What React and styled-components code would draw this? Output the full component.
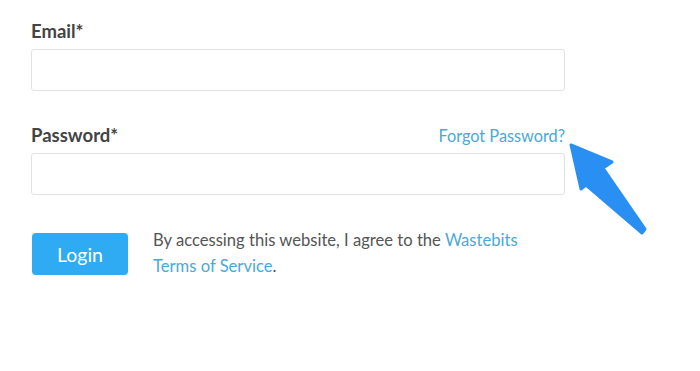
import React from "react";
import styled, { createGlobalStyle } from "styled-components";

const Global = createGlobalStyle`
  html, body { margin: 0; padding: 0; background: #fff; }
  body { font-family: "Lato", "Open Sans", sans-serif; }
`;

const Page = styled.div`
  position: relative;
  width: 700px;
  height: 371px;
  padding: 20px 0 0 31px;
  box-sizing: border-box;
  overflow: hidden;
`;

const Form = styled.form`
  width: 534px;
  display: flex;
  flex-direction: column;
`;

const Field = styled.div`
  display: flex;
  flex-direction: column;
  margin-top: ${(p) => p.$gap || 0}px;
`;

const LabelRow = styled.div`
  display: flex;
  justify-content: space-between;
  align-items: baseline;
  height: 22px;
  margin-bottom: 7px;
  font-size: 16.3px;
`;

const Label = styled.label`
  font-size: 18.5px;
  line-height: 22px;
  font-weight: 700;
  color: #444;
`;

const Link = styled.a`
  color: #4aa9d6;
  text-decoration: none;
  font-size: inherit;
  cursor: pointer;
`;

const Input = styled.input`
  height: 42px;
  box-sizing: border-box;
  border: 1px solid #e2e2e2;
  border-radius: 3px;
  background: #fff;
  padding: 0 12px;
  font-size: 16px;
  outline: none;
`;

const Footer = styled.div`
  display: flex;
  align-items: flex-start;
  margin-top: 32px;
  gap: 25px;
`;

const Button = styled.button`
  margin-top: 6px;
  margin-left: 1px;
  width: 96px;
  height: 42px;
  border: none;
  border-radius: 4px;
  background: #2eabf3;
  color: #fff;
  font-family: "Lato", "Open Sans", sans-serif;
  font-size: 19.5px;
  cursor: pointer;
`;

const Agree = styled.p`
  margin: 0;
  font-size: 16.6px;
  line-height: 26px;
  color: #555;
`;

const Arrow = styled.svg`
  position: absolute;
  left: 0;
  top: 0;
  pointer-events: none;
`;

export default function App() {
  return (
    <>
      <Global />
      <Page>
        <Form onSubmit={(e) => e.preventDefault()}>
          <Field>
            <LabelRow>
              <Label>Email*</Label>
            </LabelRow>
            <Input type="email" />
          </Field>
          <Field $gap={33}>
            <LabelRow>
              <Label>Password*</Label>
              <Link>Forgot Password?</Link>
            </LabelRow>
            <Input type="password" />
          </Field>
          <Footer>
            <Button type="submit">Login</Button>
            <Agree>
              By accessing this website, I agree to the <Link>Wastebits</Link>
              <br />
              <Link>Terms of Service</Link>.
            </Agree>
          </Footer>
        </Form>
        <Arrow width="700" height="371" viewBox="0 0 700 371">
          <polygon
            points="571,145 612,162 603,168 645,229 642,233 586,185 581,189"
            fill="#2a8ff2"
            strokeLinejoin="round"
            stroke="#2a8ff2"
            strokeWidth="3"
          />
        </Arrow>
      </Page>
    </>
  );
}
